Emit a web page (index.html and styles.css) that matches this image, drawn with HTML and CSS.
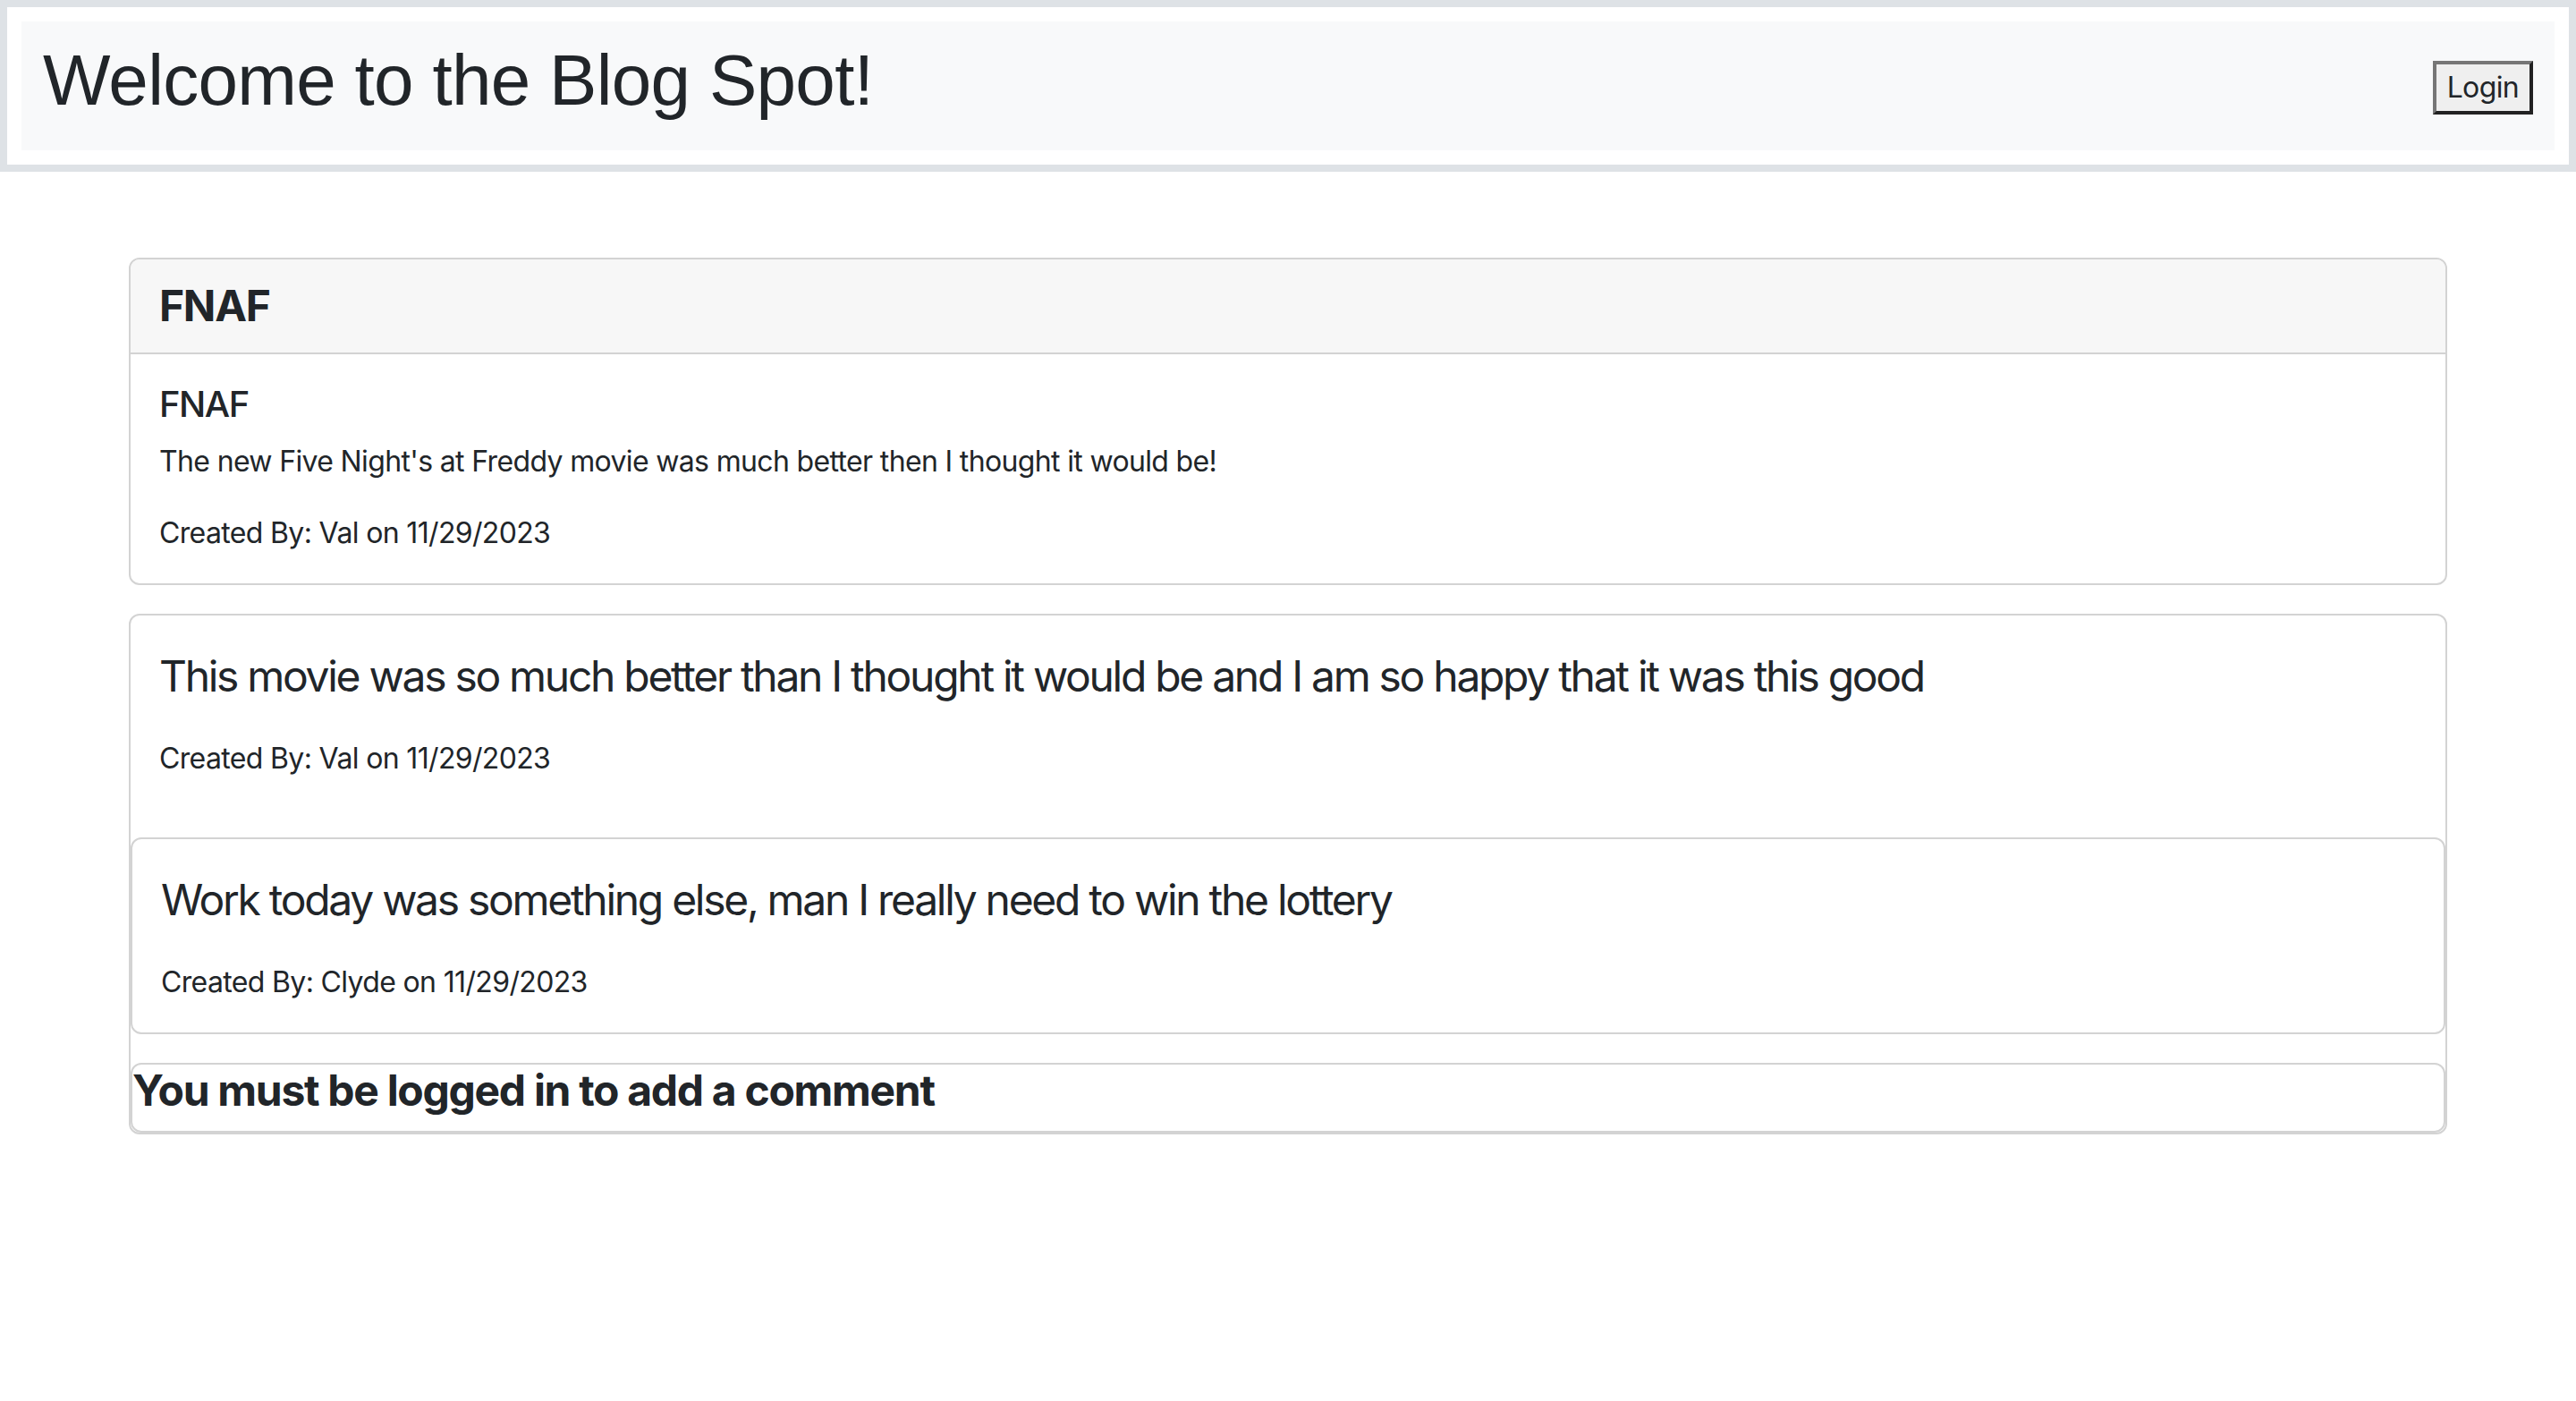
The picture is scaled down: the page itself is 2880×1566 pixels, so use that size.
FILE: index.html
```html
<!DOCTYPE html>
<html lang="en">
<head>
<meta charset="utf-8">
<title>Blog Spot</title>
<link rel="stylesheet" href="styles.css">
</head>
<body>
<header class="site-header">
  <nav class="navbar">
    <h1 class="brand">Welcome to the Blog Spot!</h1>
    <button class="login-btn" type="button">Login</button>
  </nav>
</header>
<main class="container">
  <article class="card post">
    <div class="card-header">FNAF</div>
    <div class="card-body">
      <h5 class="card-title">FNAF</h5>
      <p class="card-text">The new Five Night's at Freddy movie was much better then I thought it would be!</p>
      <p class="card-text last">Created By: Val on 11/29/2023</p>
    </div>
  </article>
  <section class="card comments">
    <div class="comment">
      <p class="comment-text">This movie was so much better than I thought it would be and I am so happy that it was this good</p>
      <p class="comment-meta">Created By: Val on 11/29/2023</p>
    </div>
    <div class="card comment comment-card">
      <p class="comment-text">Work today was something else, man I really need to win the lottery</p>
      <p class="comment-meta">Created By: Clyde on 11/29/2023</p>
    </div>
    <div class="card comment-form">
      <h4 class="login-note">You must be logged in to add a comment</h4>
    </div>
  </section>
</main>
</body>
</html>
```
FILE: styles.css
```css
html, body {
  margin: 0;
  padding: 0;
  background: #fff;
}
body {
  font-family: Inter, "Noto Sans", "Liberation Sans", sans-serif;
  color: #212529;
  font-size: 32px;
  line-height: 1.5;
  letter-spacing: -0.65px;
}
.site-header {
  border: 8px solid #dee2e6;
  padding: 16px;
}
.navbar {
  background: #f8f9fa;
  display: flex;
  align-items: center;
  justify-content: space-between;
  padding: 18px 24px 14px 24px;
}
.brand {
  font-family: "Liberation Sans", Arial, sans-serif;
  font-size: 80px;
  font-weight: 400;
  line-height: 1.2;
  letter-spacing: -0.7px;
  margin: 0 0 16px 0;
}
.login-btn {
  font-family: Inter, "Noto Sans", sans-serif;
  font-size: 32px;
  line-height: 48px;
  letter-spacing: -0.65px;
  color: #212529;
  background: #efefef;
  padding: 2px 12px;
  border-width: 4px;
  border-style: solid;
  border-color: #767676 #222222 #222222 #767676;
  margin: 0;
}
.container {
  width: 2592px;
  margin: 96px auto 0 auto;
}
.card {
  border: 2px solid #d3d3d3;
  border-radius: 12px;
  background: #fff;
  display: flex;
  flex-direction: column;
}
.card-header {
  background: #f7f7f7;
  border-bottom: 2px solid #d3d3d3;
  border-radius: 10px 10px 0 0;
  padding: 16px 32px;
  font-size: 48px;
  font-weight: 700;
  line-height: 72px;
  letter-spacing: -1.3px;
}
.card-body {
  padding: 32px;
}
.card-title {
  font-size: 40px;
  font-weight: 500;
  line-height: 1.2;
  letter-spacing: -1.5px;
  margin: 0 0 16px 0;
}
.card-text {
  margin: 0 0 32px 0;
}
.card-text.last {
  margin-bottom: 0;
}
.comments {
  margin-top: 32px;
}
.comment {
  padding: 32px;
}
.comment-text {
  font-size: 48px;
  line-height: 72px;
  letter-spacing: -2.3px;
  margin: 0 0 32px 0;
}
.comment-meta {
  margin: 0 0 32px 0;
}
.comment-card .comment-meta {
  margin-bottom: 0;
}
.comment-form {
  margin-top: 32px;
}
.login-note {
  font-size: 48px;
  font-weight: 700;
  line-height: 1.2;
  letter-spacing: -1.3px;
  margin: 0 0 16px 0;
}
```
